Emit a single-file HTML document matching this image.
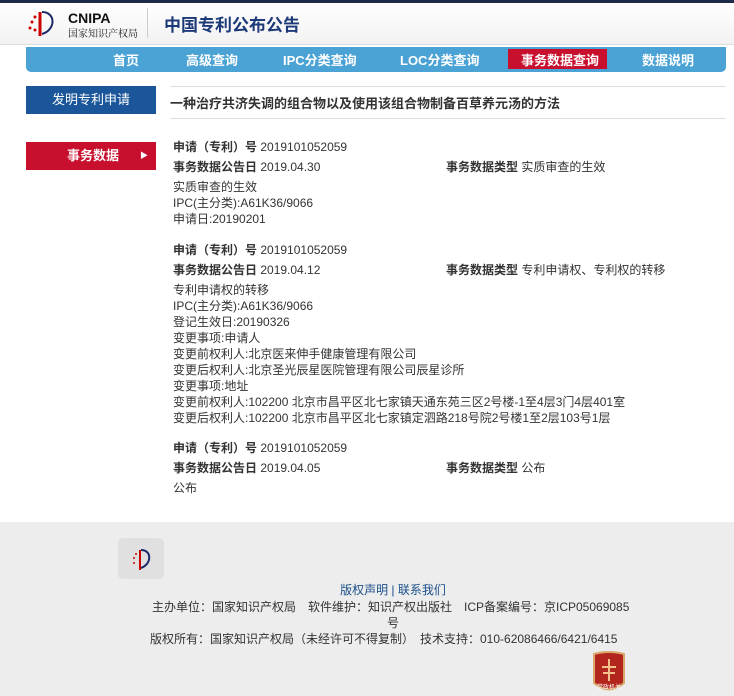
<!DOCTYPE html>
<html><head><meta charset="utf-8"><style>
*{margin:0;padding:0;box-sizing:border-box}
body{width:734px;height:696px;overflow:hidden;background:#fff;font-family:"Liberation Sans","Noto Sans CJK SC",sans-serif;font-size:12px;color:#333;position:relative}
.a{position:absolute;white-space:nowrap}
.hdr{position:absolute;left:0;top:0;width:734px;height:45px;background:linear-gradient(#fff,#f2f2f2);border-top:3px solid #1d2a4a;border-bottom:1px solid #ddd}
.nav{position:absolute;left:26px;top:47px;width:700px;height:25px;background:#4aa2d5;border-radius:0 0 5px 5px}
.nav span{position:absolute;top:3px;color:#fff;font-weight:bold;font-size:13px}
b{font-weight:bold;color:#333}
.foot{position:absolute;left:0;top:522px;width:734px;height:174px;background:#ededed}
</style></head><body>
<div class="hdr"></div>
<svg class="a" style="left:26px;top:8px" width="30" height="30" viewBox="0 0 30 30"><path d="M14 4 L14 28" stroke="#c00" stroke-width="3"/><path d="M16 4 C30 4 30 22 16 26" stroke="#1d2a6a" stroke-width="2" fill="none"/><circle cx="6" cy="14" r="1.5" fill="#c00"/><circle cx="9" cy="9" r="1.5" fill="#c00"/><circle cx="4" cy="20" r="1.5" fill="#c00"/><circle cx="9" cy="22" r="1.5" fill="#c00"/></svg>
<div class="a" style="left:68px;top:10px;font-size:14px;font-weight:bold;color:#111">CNIPA</div>
<div class="a" style="left:68px;top:25px;font-size:10px;color:#222;font-family:'Noto Serif CJK SC',serif">国家知识产权局</div>
<div class="a" style="left:147px;top:8px;width:1px;height:30px;background:#ccc"></div>
<div class="a" style="left:164px;top:11px;font-size:17px;font-weight:bold;color:#1d3a78">中国专利公布公告</div>
<div class="nav">
<span style="left:87px">首页</span>
<span style="left:160px">高级查询</span>
<span style="left:257px">IPC分类查询</span>
<span style="left:374px">LOC分类查询</span>
<div class="a" style="left:482px;top:2px;width:99px;height:20px;background:#c8102e"></div>
<span style="left:495px">事务数据查询</span>
<span style="left:616px">数据说明</span>
</div>
<div class="a" style="left:26px;top:86px;width:130px;height:28px;background:#1a5699;color:#fff;font-size:13px;text-align:center;line-height:28px">发明专利申请</div>
<div class="a" style="left:26px;top:142px;width:130px;height:28px;background:#c8102e;color:#fff;font-size:13px;line-height:28px;padding-left:41px;font-weight:bold">事务数据<span style="position:absolute;left:114px;font-size:8px">▶</span></div>
<div class="a" style="left:170px;top:86px;width:556px;height:1px;background:#ddd"></div>
<div class="a" style="left:170px;top:93px;font-size:13px;font-weight:bold;color:#333">一种治疗共济失调的组合物以及使用该组合物制备百草养元汤的方法</div>
<div class="a" style="left:170px;top:118px;width:556px;height:1px;background:#ddd"></div>

<div class="a" style="left:173px;top:139px;line-height:16px">
<div style="height:20px"><b>申请（专利）号</b> 2019101052059</div>
<div style="height:20px"><b>事务数据公告日</b> 2019.04.30<span class="a" style="left:273px"><b>事务数据类型</b> 实质审查的生效</span></div>
<div>实质审查的生效</div><div>IPC(主分类):A61K36/9066</div><div>申请日:20190201</div>
</div>
<div class="a" style="left:173px;top:242px;line-height:16px">
<div style="height:20px"><b>申请（专利）号</b> 2019101052059</div>
<div style="height:20px"><b>事务数据公告日</b> 2019.04.12<span class="a" style="left:273px"><b>事务数据类型</b> 专利申请权、专利权的转移</span></div>
<div>专利申请权的转移</div><div>IPC(主分类):A61K36/9066</div><div>登记生效日:20190326</div><div>变更事项:申请人</div><div>变更前权利人:北京医来伸手健康管理有限公司</div><div>变更后权利人:北京圣光辰星医院管理有限公司辰星诊所</div><div>变更事项:地址</div><div>变更前权利人:102200 北京市昌平区北七家镇天通东苑三区2号楼-1至4层3门4层401室</div><div>变更后权利人:102200 北京市昌平区北七家镇定泗路218号院2号楼1至2层103号1层</div>
</div>
<div class="a" style="left:173px;top:440px;line-height:16px">
<div style="height:20px"><b>申请（专利）号</b> 2019101052059</div>
<div style="height:20px"><b>事务数据公告日</b> 2019.04.05<span class="a" style="left:273px"><b>事务数据类型</b> 公布</span></div>
<div>公布</div>
</div>

<div class="foot">
<div class="a" style="left:118px;top:16px;width:46px;height:41px;background:#e0e0e0;border-radius:5px"></div>
<svg class="a" style="left:126px;top:22px" width="30" height="30" viewBox="0 0 30 30"><path d="M14 6 L14 26" stroke="#c00" stroke-width="2"/><path d="M15 6 C26 6 26 20 15 24" stroke="#1d2a6a" stroke-width="2" fill="none"/><circle cx="8" cy="14" r="1" fill="#c00"/><circle cx="10" cy="10" r="1" fill="#c00"/><circle cx="8" cy="19" r="1" fill="#c00"/></svg>
<div class="a" style="left:0;width:734px;top:59px;text-align:center;color:#1a4f8a;font-size:12px;padding-left:52px">版权声明 | 联系我们</div>
<div class="a" style="left:152px;top:76px;color:#333">主办单位：国家知识产权局　软件维护：知识产权出版社　ICP备案编号：京ICP05069085</div>
<div class="a" style="left:387px;top:92px;color:#333">号</div>
<div class="a" style="left:150px;top:108px;color:#333">版权所有：国家知识产权局（未经许可不得复制）　技术支持：010-62086466/6421/6415</div>
<svg class="a" style="left:591px;top:129px" width="36" height="45" viewBox="0 0 36 45"><path d="M3 3 Q18 -1 33 3 L33 32 Q18 45 3 32Z" fill="#b3261e" stroke="#d9a86a" stroke-width="2"/><path d="M18 8 L18 30 M11 16 H25 M12 22 H24" stroke="#f2c08a" stroke-width="2" fill="none"/><text x="18" y="38" font-size="6" fill="#fff" text-anchor="middle" font-family="Noto Sans CJK SC">党政机关</text></svg>
</div>
</body></html>
